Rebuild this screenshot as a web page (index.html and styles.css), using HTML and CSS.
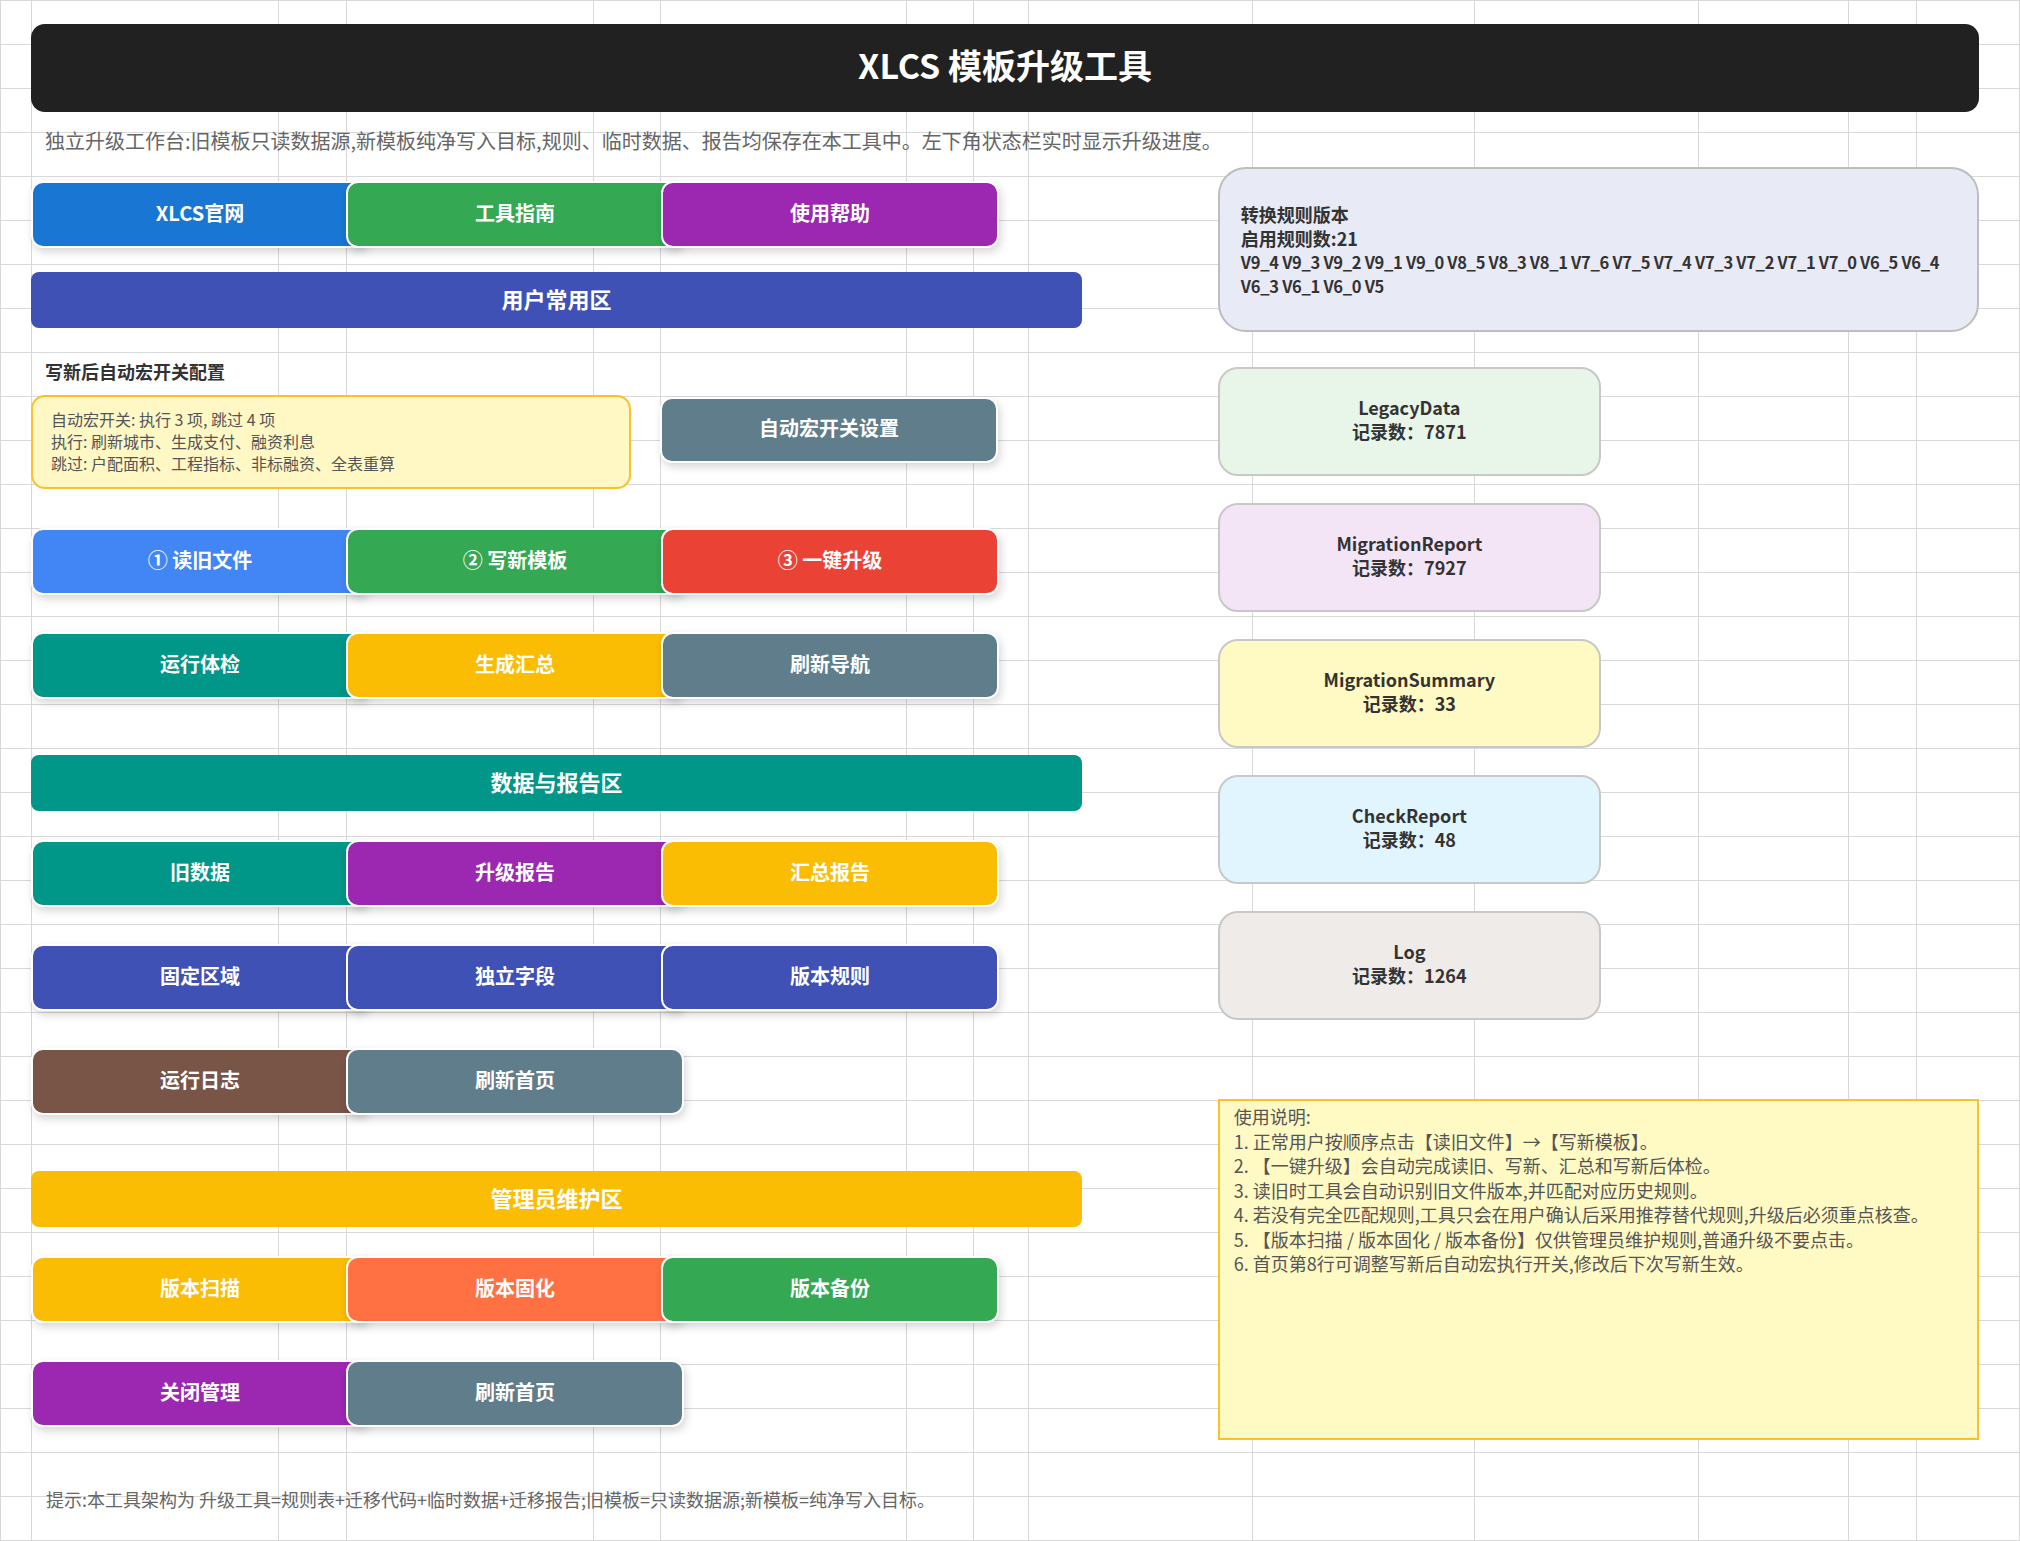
FILE: index.html
```html
<!DOCTYPE html>
<html lang="zh-CN">

<head>
  <meta charset="UTF-8">
  <meta name="viewport" content="width=device-width, initial-scale=1.0">
  <title>XLCS 模板升级工具</title>
  <link rel="stylesheet" href="styles.css">
</head>

<body>
  <div class="sheet">
    <h1 class="title">XLCS 模板升级工具</h1>
    <p class="intro">独立升级工作台:旧模板只读数据源,新模板纯净写入目标,规则、临时数据、报告均保存在本工具中。左下角状态栏实时显示升级进度。</p>

    <div class="workspace">
      <div class="panel">
        <div class="btn-row">
          <div class="btn blue-dark">XLCS官网</div>
          <div class="btn green">工具指南</div>
          <div class="btn purple">使用帮助</div>
        </div>

        <!-- 用户常用区 -->
        <div class="zone zone-first indigo">用户常用区</div>
        <div class="label">写新后自动宏开关配置</div>
        <div class="macro">
          <div class="note">
            <div>自动宏开关: 执行 3 项, 跳过 4 项</div>
            <div>执行: 刷新城市、生成支付、融资利息</div>
            <div>跳过: 户配面积、工程指标、非标融资、全表重算</div>
          </div>
          <div class="btn slate">自动宏开关设置</div>
        </div>
        <div class="btn-row">
          <div class="btn blue">① 读旧文件</div>
          <div class="btn green">② 写新模板</div>
          <div class="btn red">③ 一键升级</div>
        </div>
        <div class="btn-row">
          <div class="btn teal">运行体检</div>
          <div class="btn amber">生成汇总</div>
          <div class="btn slate">刷新导航</div>
        </div>

        <!-- 数据与报告区 -->
        <div class="zone teal">数据与报告区</div>
        <div class="btn-row">
          <div class="btn teal">旧数据</div>
          <div class="btn purple">升级报告</div>
          <div class="btn amber">汇总报告</div>
        </div>
        <div class="btn-row">
          <div class="btn indigo">固定区域</div>
          <div class="btn indigo">独立字段</div>
          <div class="btn indigo">版本规则</div>
        </div>
        <div class="btn-row">
          <div class="btn brown">运行日志</div>
          <div class="btn slate">刷新首页</div>
        </div>

        <!-- 管理员维护区 -->
        <div class="zone amber">管理员维护区</div>
        <div class="btn-row">
          <div class="btn amber">版本扫描</div>
          <div class="btn orange">版本固化</div>
          <div class="btn green">版本备份</div>
        </div>
        <div class="btn-row">
          <div class="btn purple">关闭管理</div>
          <div class="btn slate">刷新首页</div>
        </div>
      </div>

      <div class="side">
        <div class="rules">
          <div>转换规则版本</div>
          <div>启用规则数:21</div>
          <div class="versions">V9_4 V9_3 V9_2 V9_1 V9_0 V8_5 V8_3 V8_1 V7_6 V7_5 V7_4 V7_3 V7_2 V7_1 V7_0 V6_5 V6_4 V6_3 V6_1 V6_0 V5</div>
        </div>

        <div class="stats">
          <div class="stat legacy">
            <div>LegacyData</div>
            <div>记录数：7871</div>
          </div>
          <div class="stat report">
            <div>MigrationReport</div>
            <div>记录数：7927</div>
          </div>
          <div class="stat summary">
            <div>MigrationSummary</div>
            <div>记录数：33</div>
          </div>
          <div class="stat check">
            <div>CheckReport</div>
            <div>记录数：48</div>
          </div>
          <div class="stat log">
            <div>Log</div>
            <div>记录数：1264</div>
          </div>
        </div>

        <div class="usage">
          <div>使用说明:</div>
          <div>1. 正常用户按顺序点击【读旧文件】→【写新模板】。</div>
          <div>2. 【一键升级】会自动完成读旧、写新、汇总和写新后体检。</div>
          <div>3. 读旧时工具会自动识别旧文件版本,并匹配对应历史规则。</div>
          <div>4. 若没有完全匹配规则,工具只会在用户确认后采用推荐替代规则,升级后必须重点核查。</div>
          <div>5. 【版本扫描 / 版本固化 / 版本备份】仅供管理员维护规则,普通升级不要点击。</div>
          <div>6. 首页第8行可调整写新后自动宏执行开关,修改后下次写新生效。</div>
        </div>
      </div>
    </div>

    <p class="tip">提示:本工具架构为 升级工具=规则表+迁移代码+临时数据+迁移报告;旧模板=只读数据源;新模板=纯净写入目标。</p>
  </div>
</body>

</html>
```

FILE: styles.css
```css
* {
  padding: 0;
  margin: 0;
  box-sizing: border-box;
}

body {
  font-family: "Noto Sans CJK SC", "Noto Sans", sans-serif;
  color: #333;
}

/* 表格底纹：行高 44px，列宽不等 */
.sheet {
  width: 2020px;
  height: 1541px;
  padding: 24px 41px 0 31px;
  overflow: hidden;
  background:
    linear-gradient(#d9d9d9, #d9d9d9) 0 0 / 1px 100% no-repeat,
    linear-gradient(#d9d9d9, #d9d9d9) 31px 0 / 1px 100% no-repeat,
    linear-gradient(#d9d9d9, #d9d9d9) 278px 0 / 1px 100% no-repeat,
    linear-gradient(#d9d9d9, #d9d9d9) 346px 0 / 1px 100% no-repeat,
    linear-gradient(#d9d9d9, #d9d9d9) 593px 0 / 1px 100% no-repeat,
    linear-gradient(#d9d9d9, #d9d9d9) 660px 0 / 1px 100% no-repeat,
    linear-gradient(#d9d9d9, #d9d9d9) 906px 0 / 1px 100% no-repeat,
    linear-gradient(#d9d9d9, #d9d9d9) 973px 0 / 1px 100% no-repeat,
    linear-gradient(#d9d9d9, #d9d9d9) 1028px 0 / 1px 100% no-repeat,
    linear-gradient(#d9d9d9, #d9d9d9) 1252px 0 / 1px 100% no-repeat,
    linear-gradient(#d9d9d9, #d9d9d9) 1474px 0 / 1px 100% no-repeat,
    linear-gradient(#d9d9d9, #d9d9d9) 1698px 0 / 1px 100% no-repeat,
    linear-gradient(#d9d9d9, #d9d9d9) 1848px 0 / 1px 100% no-repeat,
    linear-gradient(#d9d9d9, #d9d9d9) 1916px 0 / 1px 100% no-repeat,
    linear-gradient(#d9d9d9, #d9d9d9) 2019px 0 / 1px 100% no-repeat,
    repeating-linear-gradient(#d9d9d9 0 1px, transparent 1px 44px) #fff;
}

.title {
  height: 88px;
  padding-bottom: 7px;
  display: flex;
  align-items: center;
  justify-content: center;
  background-color: #212121;
  border-radius: 14px;
  color: #fff;
  font-size: 34px;
  font-weight: 700;
}

.intro {
  margin-top: 14px;
  padding-left: 14px;
  font-size: 20px;
  line-height: 30px;
  color: #666;
}

.workspace {
  margin-top: 11px;
  display: flex;
  gap: 136px;
}

/* 左侧按钮区 */
.panel {
  width: 1052px;
  padding-top: 14px;
}

.btn-row {
  display: flex;
  margin-top: 37px;
}

.btn-row:first-child {
  margin-top: 0;
}

.btn {
  width: 338px;
  height: 67px;
  padding-bottom: 5px;
  flex-shrink: 0;
  display: flex;
  align-items: center;
  justify-content: center;
  background-color: var(--color);
  border: 2px solid #fff;
  border-radius: 12px;
  box-shadow: 2px 4px 8px rgba(0, 0, 0, 0.16);
  color: #fff;
  font-size: 20px;
  font-weight: 700;
}

.btn + .btn {
  margin-left: -23px;
}

.zone {
  height: 56px;
  margin-top: 56px;
  padding-bottom: 5px;
  display: flex;
  align-items: center;
  justify-content: center;
  background-color: var(--color);
  border-radius: 8px;
  color: #fff;
  font-size: 22px;
  font-weight: 700;
}

.zone-first {
  margin-top: 24px;
}

.zone + .btn-row {
  margin-top: 29px;
}

.label {
  margin-top: 31px;
  padding-left: 14px;
  font-size: 18px;
  line-height: 24px;
  font-weight: 700;
  color: #333;
}

.macro {
  margin-top: 12px;
  display: flex;
  align-items: flex-start;
}

.macro + .btn-row {
  margin-top: 39px;
}

.note {
  width: 600px;
  height: 94px;
  padding: 11px 18px 13px;
  background-color: #fff8c5;
  border: 2px solid #fbc02d;
  border-radius: 14px;
  font-size: 16px;
  line-height: 22px;
  color: #555;
}

.macro .btn {
  height: 66px;
  margin: 2px 0 0 29px;
}

/* 颜色 */
.blue-dark { --color: #1976d2; }
.blue { --color: #4285f4; }
.green { --color: #34a853; }
.red { --color: #ea4335; }
.purple { --color: #9c27b0; }
.indigo { --color: #3f51b5; }
.teal { --color: #009688; }
.amber { --color: #fbbc04; }
.orange { --color: #ff7043; }
.slate { --color: #607d8b; }
.brown { --color: #795548; }

/* 右侧信息区 */
.side {
  width: 762px;
}

.rules {
  height: 165px;
  padding: 0 10px 0 21px;
  display: flex;
  flex-direction: column;
  justify-content: center;
  background-color: #e8eaf6;
  border: 2px solid #bdbdbd;
  border-radius: 28px;
  font-size: 18px;
  line-height: 24px;
  font-weight: 700;
  color: #333;
}

.rules .versions {
  font-size: 16.5px;
  letter-spacing: -0.3px;
}

.stats {
  margin-top: 35px;
  display: flex;
  flex-direction: column;
  gap: 27px;
}

.stat {
  width: 383px;
  height: 109px;
  padding-bottom: 5px;
  display: flex;
  flex-direction: column;
  align-items: center;
  justify-content: center;
  background-color: var(--bg);
  border: 2px solid #c8c8c8;
  border-radius: 20px;
  font-size: 18px;
  line-height: 24px;
  font-weight: 700;
  color: #333;
}

.legacy { --bg: #e8f5e9; }
.report { --bg: #f3e5f5; }
.summary { --bg: #fff9c4; }
.check { --bg: #e1f5fe; }
.log { --bg: #efebe9; }

.usage {
  height: 341px;
  margin-top: 79px;
  padding: 3px 14px;
  background-color: #fff9c4;
  border: 2px solid #fbc02d;
  font-size: 18px;
  line-height: 24.5px;
  color: #555;
}

.tip {
  margin-top: 46px;
  padding-left: 15px;
  font-size: 18px;
  line-height: 26px;
  color: #666;
}
```
